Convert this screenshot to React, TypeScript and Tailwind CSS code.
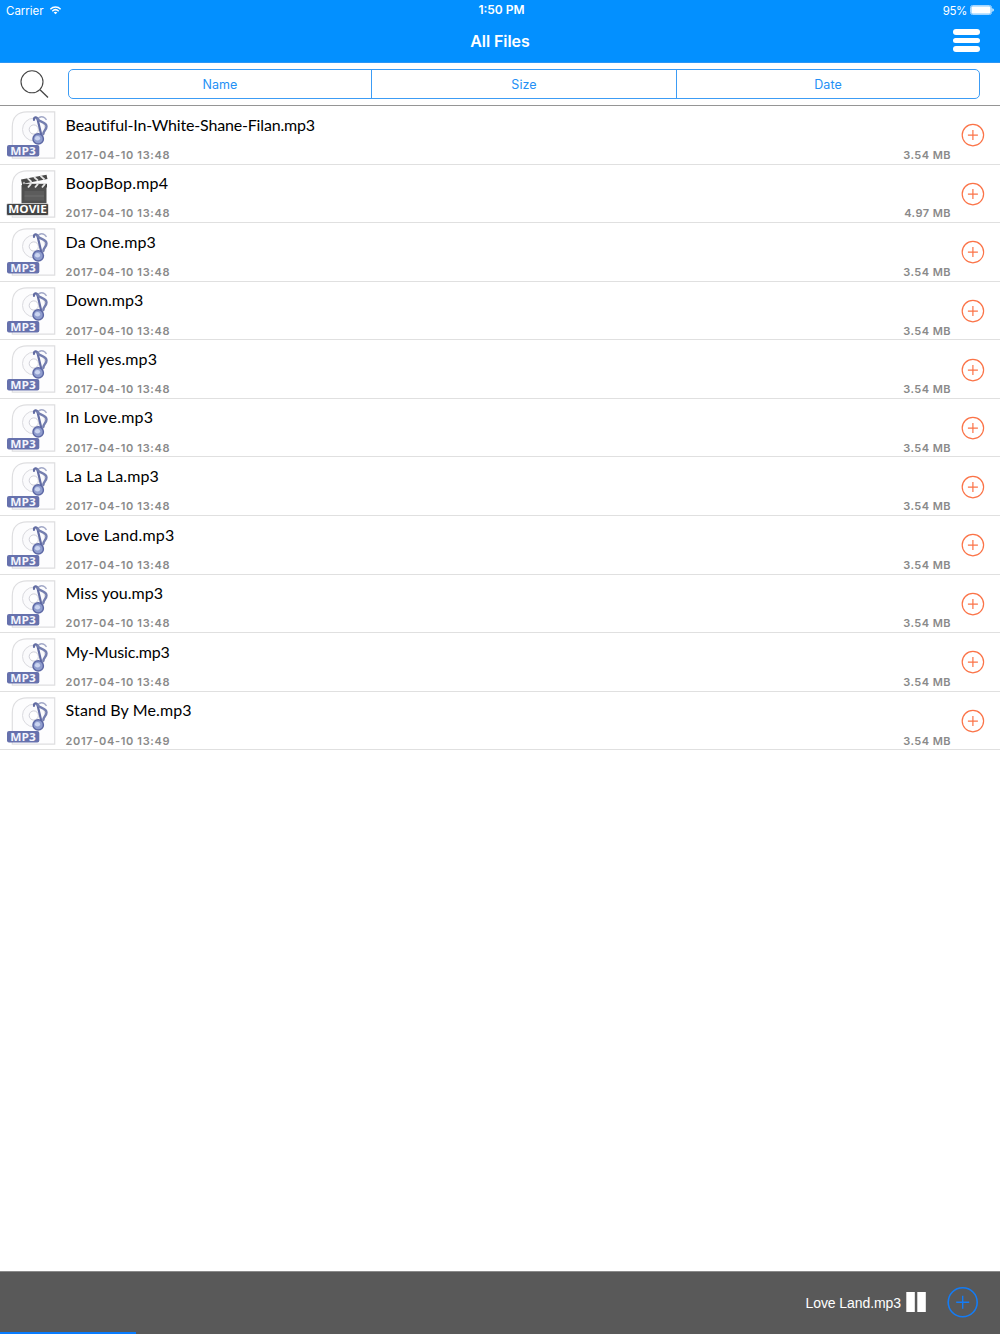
const files = [
  { name: 'Beautiful-In-White-Shane-Filan.mp3', time: '13:48', size: '3.54 MB', track: 'tracking-[-0.170px]' },
  { name: 'BoopBop.mp4', time: '13:48', size: '4.97 MB', track: 'tracking-[0.180px]' },
  { name: 'Da One.mp3', time: '13:48', size: '3.54 MB', track: 'tracking-[0.120px]' },
  { name: 'Down.mp3', time: '13:48', size: '3.54 MB', track: 'tracking-[0px]' },
  { name: 'Hell yes.mp3', time: '13:48', size: '3.54 MB', track: 'tracking-[0.100px]' },
  { name: 'In Love.mp3', time: '13:48', size: '3.54 MB', track: 'tracking-[0.180px]' },
  { name: 'La La La.mp3', time: '13:48', size: '3.54 MB', track: 'tracking-[0.120px]' },
  { name: 'Love Land.mp3', time: '13:48', size: '3.54 MB', track: 'tracking-[0.200px]' },
  { name: 'Miss you.mp3', time: '13:48', size: '3.54 MB', track: 'tracking-[0px]' },
  { name: 'My-Music.mp3', time: '13:48', size: '3.54 MB', track: 'tracking-[-0.170px]' },
  { name: 'Stand By Me.mp3', time: '13:49', size: '3.54 MB', track: 'tracking-[0.120px]' },
];

function Mp3Icon() {
  return (
    <svg className="h-[58px] w-[60px] shrink-0" viewBox="0 0 60 58" fill="none">
      <path d="M12.300 52.200V21C12.300 11 18 5.900 27 5.900H54.700V52.200Z" fill="#fdfdfe" stroke="#dedee0" strokeWidth="1.200" />
      <circle cx="33.800" cy="23.500" r="11.300" fill="#fafafc" stroke="#dadadf" strokeWidth="1" />
      <circle cx="33.800" cy="23.500" r="4.600" fill="#fff" stroke="#d0d0d8" strokeWidth="1" />
      <path d="M37.500 14C39 9.800 44 9.500 46.500 14" stroke="#a5abc9" strokeWidth="1.300" />
      <path d="M34 13.800C33.700 11 37 10.500 37.500 13L41.800 31" stroke="#626ca3" strokeWidth="2.200" strokeLinecap="round" strokeLinejoin="round" />
      <path d="M37.500 12.500C38.500 16.500 46.500 15.500 46.500 20.500C46.500 24 43.500 24.500 43.300 28" stroke="#747eaf" strokeWidth="2.400" strokeLinecap="round" />
      <circle cx="38.200" cy="32.900" r="5.200" fill="#8f9dce" stroke="#5d68a5" strokeWidth="1.500" />
      <ellipse cx="37.500" cy="32.200" rx="2.600" ry="2.200" fill="#cbd4f0" />
      <rect x="7" y="38.900" width="32.300" height="11.500" rx="2" fill="#6671ad" />
      <text x="23" y="48.500" textAnchor="middle" textLength="25.500" lengthAdjust="spacingAndGlyphs" fill="#f2f4fc" fontFamily="Open Sans, sans-serif" fontWeight="700" fontSize="10.500">MP3</text>
    </svg>
  );
}

function MovieIcon() {
  return (
    <svg className="h-[58px] w-[60px] shrink-0" viewBox="0 0 60 58" fill="none">
      <path d="M12.300 52.200V21C12.300 11 18 5.900 27 5.900H54.700V52.200Z" fill="#fdfdfe" stroke="#dedee0" strokeWidth="1.200" />
      <path d="M21.500 20H46.500V40H21.500Z" fill="#505050" />
      <path d="M21 14.500L46.500 9.800L47.500 14L22 19Z" fill="#484848" />
      <path d="M27.500 13.200L31.500 17M34 12L38 15.700M40.500 10.800L44.500 14.500" stroke="#e4e4e4" strokeWidth="1.800" />
      <path d="M22 18.800H47V22.500H22Z" fill="#484848" />
      <path d="M31 18.800L28 22.500M38 18.800L35 22.500M45 18.800L42 22.500" stroke="#e4e4e4" strokeWidth="1.900" />
      <path d="M24.500 26H44V35.500H24.500Z" fill="#5c5c5c" />
      <path d="M24.500 31H44" stroke="#7d7d7d" strokeWidth="0.600" />
      <circle cx="24" cy="18" r="1.200" fill="#aaa" />
      <rect x="6.500" y="38.500" width="42" height="12" rx="1.500" fill="#464646" stroke="#f5f5f5" strokeWidth="0.700" />
      <text x="27.500" y="48.300" textAnchor="middle" textLength="38.500" lengthAdjust="spacingAndGlyphs" fill="#fff" fontFamily="Open Sans, sans-serif" fontWeight="700" fontSize="10.500">MOVIE</text>
    </svg>
  );
}

function AddIcon() {
  return (
    <svg className="size-6" viewBox="0 0 24 24" fill="none" stroke="#fb7347">
      <circle cx="11.900" cy="12.100" r="10.700" strokeWidth="1.200" />
      <path d="M6.900 12.100H16.900M11.900 7.100V17.100" strokeWidth="1.200" />
    </svg>
  );
}

export default function App() {
  return (
    <div className="flex h-[1334px] w-[1000px] flex-col overflow-hidden bg-white font-['Inter',sans-serif]">
      <header className="h-[63px] shrink-0 border-b border-[#2b96f5] bg-[#0390ff] text-white">
        <div className="grid h-[21px] grid-cols-3 items-center pr-[6px] pl-[6px] text-[12px] leading-[20px]">
          <div className="flex items-center gap-[5px]">
            <span className="text-[11.500px] tracking-[-0.020px]">Carrier</span>
            <svg className="mb-px h-[9px] w-[13px]" viewBox="0 0 13 10" fill="none" stroke="#fff" strokeWidth="1.600">
              <path d="M0.800 3.600C4 0.300 9 0.300 12.200 3.600M2.900 5.800C5 3.700 8 3.700 10.100 5.800" />
              <path d="M6.500 9.300L4.500 7.300C5.600 6.200 7.400 6.200 8.500 7.300Z" fill="#fff" stroke="none" />
            </svg>
          </div>
          <span className="pb-px pl-[3px] text-center font-semibold">1:50 PM</span>
          <div className="flex items-center justify-end gap-[3px]">
            <span className="text-[11.500px] tracking-[-0.400px]">95%</span>
            <svg className="mb-px h-[10px] w-[24px]" viewBox="0 0 24 10">
              <rect x="0.500" y="0.500" width="21" height="9" rx="2" fill="none" stroke="#a5d6ff" />
              <rect x="1.300" y="1.300" width="19.400" height="7.400" rx="1.300" fill="#fff" />
              <path d="M22.400 3.200C24.200 4 24.200 6 22.400 6.800Z" fill="#fff" />
            </svg>
          </div>
        </div>
        <div className="grid h-[41px] grid-cols-3 items-center">
          <span />
          <h1 className="pb-[2px] text-center text-[16px] leading-[20px] font-semibold tracking-[-0.080px]">All Files</h1>
          <div className="flex flex-col items-end gap-[3px] pr-[20px] pb-[2px]">
            <i className="h-[5.400px] w-[27px] rounded-full bg-white" />
            <i className="h-[5.400px] w-[27px] rounded-full bg-white" />
            <i className="h-[5.400px] w-[27px] rounded-full bg-white" />
          </div>
        </div>
      </header>

      <div className="flex h-[43px] shrink-0 items-center border-b border-[#959595] pr-[20px] pl-[20px]">
        <svg className="h-[29px] w-[29px]" viewBox="0 0 29 29" fill="none" stroke="#444" strokeWidth="1.100">
          <circle cx="12" cy="11.800" r="11" />
          <path d="M20 19.800L28 27.500" strokeWidth="1.300" />
        </svg>
        <div className="ml-[19px] grid h-[30px] flex-1 grid-cols-[303px_305px_1fr] divide-x divide-[#3c9cf5] rounded-[5px] border border-[#3c9cf5] text-center text-[12.500px] leading-[27px] tracking-[0.050px] text-[#2490f5]">
          <span className="pt-px">Name</span>
          <span className="pt-px">Size</span>
          <span className="pt-px">Date</span>
        </div>
      </div>

      <ul className="flex-1">
        {files.map((f) => (
          <li key={f.name} className="flex h-[58.590px] border-b border-[#e0e0e0]">
            {f.name.endsWith('mp4') ? <MovieIcon /> : <Mp3Icon />}
            <div className="flex flex-1 flex-col pl-[5.600px]">
              <span className={`mt-[8.500px] h-[20px] self-start font-['Lato',sans-serif] text-[16px] leading-[20px] whitespace-nowrap text-black ${f.track}`}>{f.name}</span>
              <div className="mt-[12.300px] flex h-[16px] justify-between text-[11px] leading-[16px] font-semibold text-[#8a8a8a]">
                <span className="tracking-[0.650px]">2017-04-10 {f.time}</span>
                <span className="tracking-[0.450px]">{f.size}</span>
              </div>
            </div>
            <div className="flex w-[49px] items-center justify-center pt-px pr-[5px]">
              <AddIcon />
            </div>
          </li>
        ))}
      </ul>

      <footer className="flex h-[63px] shrink-0 flex-col border-t border-[#8a8a8a] bg-[#595959]">
        <div className="flex h-[60px] items-center justify-end pr-[21px]">
          <span className="pt-px font-['Liberation_Sans',sans-serif] text-[14px] leading-[20px] tracking-[-0.080px] text-white">Love Land.mp3</span>
          <svg className="ml-[5px] h-[20px] w-[20px]" viewBox="0 0 20 20" fill="#fff">
            <path d="M0.300 0H8.800V20H0.300ZM11.300 0H19.800V20H11.300Z" />
          </svg>
          <svg className="ml-[21px] size-8" viewBox="0 0 32 32" fill="none" stroke="#147cf5">
            <circle cx="15.700" cy="16.200" r="14.500" strokeWidth="1.600" />
            <path d="M9.200 16.200H22.200M15.700 9.700V22.700" strokeWidth="1.400" />
          </svg>
        </div>
        <div className="h-[2px] w-[136px] bg-[#087cff]" />
      </footer>
    </div>
  );
}
